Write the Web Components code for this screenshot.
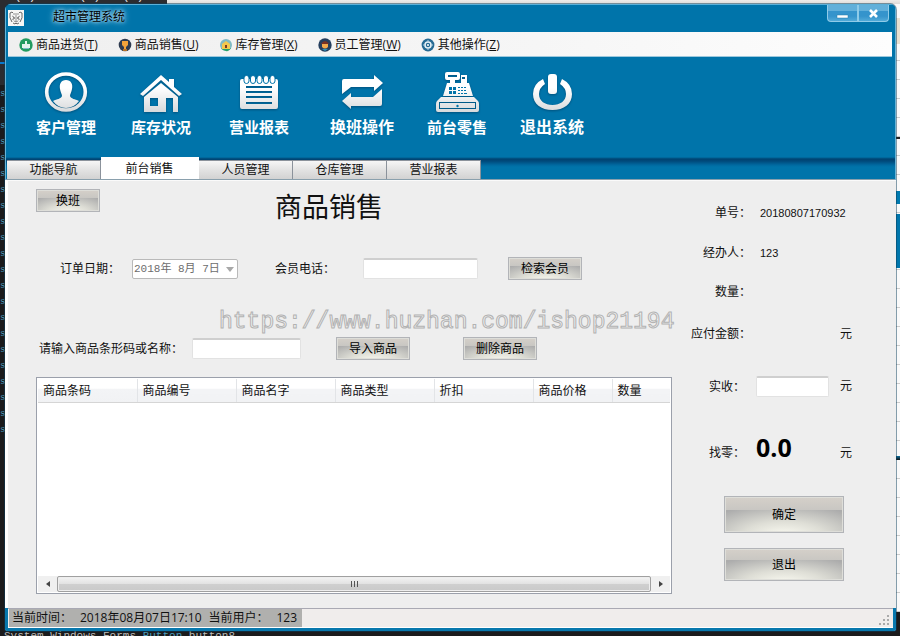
<!DOCTYPE html>
<html lang="zh-CN">
<head>
<meta charset="utf-8">
<title>超市管理系统</title>
<style>
body { margin: 0; padding: 4px 4px 5px 5px; box-sizing: border-box; min-height: 100vh; display: grid; position: relative; overflow: hidden; background: #1b1b1c; font: 12px/16px "Open Sans", "Noto Sans CJK SC", sans-serif; color: #111; }
</style>
</head>
<body>
<desk-backdrop></desk-backdrop>
<pos-window>
  <title-bar slot="title">超市管理系统</title-bar>
  <menu-bar slot="menu"></menu-bar>
  <tool-bar slot="tools"></tool-bar>
  <tab-strip slot="tabs"></tab-strip>
  <sales-form slot="main"></sales-form>
  <checkout-panel slot="side"></checkout-panel>
  <status-bar slot="status"></status-bar>
</pos-window>
<script>
const define = (name, html, setup) => customElements.define(name, class extends HTMLElement {
  constructor() {
    super();
    this.attachShadow({ mode: "open" }).innerHTML = "<style>*{box-sizing:border-box}button{font:inherit;color:inherit;padding:0;border:0;background:none}</style>" + html;
    if (setup) setup(this, this.shadowRoot);
  }
});

/* Editor and sheets that show round the window's edges */
define("desk-backdrop", `
<style>
:host{position:absolute;inset:0;z-index:-1;display:block;overflow:hidden;background:#1b1b1c;font:12px/16px "Liberation Mono",monospace}
.top{position:absolute;top:0;left:167px;right:0;height:12px;background:linear-gradient(#eeece9,#dddad7 4px,#888 5px)}
.code{position:absolute;left:0;top:86px;margin:0;font:9px/16px "Liberation Mono",monospace;color:#4b9bbd}
.tabline{position:absolute;left:0;top:62px;width:5px;height:2px;background:#0a7acc}
.editor{position:absolute;left:0;top:0;width:167px;height:85px;background:#2b2c30}
.head{position:absolute;left:0;top:-12px;color:#ddd;white-space:pre}
.foot{position:absolute;left:4px;bottom:-8px;color:#bbb;font-size:11px}
.foot b{font-weight:400;color:#4b9bbd}
.right{position:absolute;right:0;top:4px;width:10px;height:608px;background:
 linear-gradient(#007ab0,#007ab0) 0 187px/100% 13px no-repeat,
 linear-gradient(#0076ac,#0076ac) 0 210px/100% 54px no-repeat,
 linear-gradient(#222,#222) 0 133px/100% 2px no-repeat,
 linear-gradient(#0a6e9d,#111) 0 452px/100% 4px no-repeat,
 linear-gradient(#e9e0d0,#e9e0d0) 0 14px/100% 26px no-repeat,
 repeating-linear-gradient(#fafafa 0 18px,#ccc 18px 19px)}
</style>
<div class="editor"></div><div class="top"></div><div class="tabline"></div>
<div class="head">  (-)   ▀▀▀(-)   (-)</div>
<pre class="code"></pre><div class="right"></div>
<div class="foot">System.Windows.Forms.<b>Button</b> button8</div>`,
(el, root) => { root.querySelector("pre").textContent = Array(22).fill("s").join("\n"); });

define("pos-window", `
<style>
:host{display:grid;grid-template-rows:28px 25px 100px 23px 1fr 23px;grid-template-columns:minmax(0,1fr) 224px;border-radius:6px 6px 3px 3px;overflow:hidden;background:#0074aa;box-shadow:0 0 0 1px #0b3d5a80}
.wide{grid-column:1/-1;display:grid;min-width:0}
.frame{border:solid #69b4d6;border-width:0 1px}
.title{border-top:1px solid #5cb0d8}
.left,.side{display:grid;background:#eee;border-top:1px solid #fafafa;min-width:0}
.left{border-left:3px solid #fff}
</style>
<div class="wide frame title"><slot name="title"></slot></div>
<div class="wide frame"><slot name="menu"></slot></div>
<div class="wide frame"><slot name="tools"></slot></div>
<div class="wide frame"><slot name="tabs"></slot></div>
<div class="left"><slot name="main"></slot></div>
<div class="side"><slot name="side"></slot></div>
<div class="wide"><slot name="status"></slot></div>`);

define("title-bar", `
<style>
:host{display:flex;align-items:flex-start;padding:0 6px 0 2px}
.logo{margin-top:5px;width:16px;height:16px;background:#f7f7f5;flex:none}
h1{flex:1;margin:4px 0 0 29px;font:12px/16px "Open Sans","Noto Sans CJK SC",sans-serif;color:#000;text-shadow:0 0 3px #9fd3ec,0 0 5px #9fd3ec,0 0 7px #9fd3ec}
button{height:17px;width:31px;border:1px solid #8fcbe8;border-top:0;background:linear-gradient(#62b0da 0 35%,#3594cc 36% 70%,#52aad8);display:grid;place-items:center}
button:first-of-type{border-radius:0 0 0 4px}button:last-of-type{border-radius:0 0 4px 0}
</style>
<svg class="logo" viewBox="0 0 16 16" fill="none" stroke="#444" stroke-width=".8"><path d="M2 3l2-1 1 1M14 3l-2-1-1 1M2 3q-1 5 2 9M14 3q1 5-2 9M5 13l2 1 1-1 1 1 2-1"/><path d="M6 3v2M10 3v2M8 3v9M4 6l2 1M12 6l-2 1M4 9l2 1M12 9l-2 1M6 11l2 1 2-1" stroke="#777"/><path d="M6 7v2M10 7v2" stroke="#000"/></svg>
<h1><slot></slot></h1>
<button aria-label="最小化"><svg width="13" height="13"><path d="M1 8h11v3H1z" fill="#fff" stroke="#2b7cab" stroke-width=".5"/></svg></button>
<button aria-label="关闭"><svg width="13" height="13"><path d="M3 3l7 7M10 3l-7 7" stroke="#fff" stroke-width="2.6"/></svg></button>`);

define("menu-bar", `
<style>
:host{display:flex;margin:0 3px 0 2px;padding:1px 0 0 11px;gap:20px;align-items:center;background:linear-gradient(90deg,#efefef,#f6f6f6 60%,#fdfdfd);border-bottom:1px solid #9cc8dd}
button{display:flex;align-items:center;gap:3px;white-space:nowrap;line-height:16px}
svg{width:14px;height:14px;flex:none}
</style>
<button><svg viewBox="0 0 14 14"><circle cx="7" cy="7" r="6.7" fill="#239b60"/><path d="M6 3h2v3h3v4H3V6h3z" fill="#e5f4ef"/><path d="M4 10h6v1H4z" fill="#7fb9c9"/></svg><span>商品进货(<u>T</u>)</span></button>
<button><svg viewBox="0 0 14 14"><circle cx="7" cy="7" r="6.3" fill="#2e3b50"/><path d="M4 3h6v4L8 9v2H6V9L4 7z" fill="#f2a33b"/><path d="M5 11h4v2H5z" fill="#b5732a"/></svg><span>商品销售(<u>U</u>)</span></button>
<button><svg viewBox="0 0 14 14"><circle cx="7" cy="7" r="6" fill="#81bac4"/><path d="M2 10h10q-2 4-5 3-3 0-5-3" fill="#27a268"/><path d="M3 6l4-3 4 3v5H3z" fill="#f5c84d"/><path d="M6 7h2v3H6z" fill="#7b3b23"/></svg><span>库存管理(<u>X</u>)</span></button>
<button><svg viewBox="0 0 14 14"><circle cx="7" cy="7" r="6.7" fill="#253f5e"/><path d="M3 6q4-6 8 0z" fill="#7a3324"/><path d="M4 6h6v3q-3 3-6 0z" fill="#f0a94c"/><path d="M4 11h6l-3 2z" fill="#2c91bb"/></svg><span>员工管理(<u>W</u>)</span></button>
<button><svg viewBox="0 0 14 14"><circle cx="7" cy="7" r="6.4" fill="#266b94"/><circle cx="7" cy="7" r="3" fill="none" stroke="#e6f1f6" stroke-width="1.6"/><path d="M7 2v2M7 10v2M2 7h2M10 7h2" stroke="#b8d5e4"/><circle cx="7" cy="7" r="1" fill="#fff"/></svg><span>其他操作(<u>Z</u>)</span></button>`);

const toolIcons = {
  user: '<ellipse cx="22" cy="21" rx="19.3" ry="18" fill="none" stroke="url(#g)" stroke-width="3.6"/><path d="M22 9c5 0 7 4 6 9-.4 3-2 5-2 7 1 3 5 3 9 5q-5 7-13 7T9 30c4-2 8-2 9-5 0-2-1.600-4-2-7-1-5 1-9 6-9z"/>',
  home: '<path d="M22 4L1 23l3 2 18-16 18 16 3-2-8-7V8h-5v3z"/><path fill-rule="evenodd" d="M22 12L5 26v15h22V27h7v14h5V26zM11 27h8v8h-8z"/>',
  note: '<path fill-rule="evenodd" d="M3 10q0-2 2-2h34q2 0 2 2v26q0 2-2 2H5q-2 0-2-2zm6 5v2h26v-2zm0 5v2h26v-2zm0 5v2h26v-2zm0 6v2h26v-2z"/><g stroke="#0074aa"><rect x="7" y="4.500" width="5" height="8" rx="2.500"/><rect x="13.500" y="4.500" width="5" height="8" rx="2.500"/><rect x="20" y="4.500" width="5" height="8" rx="2.500"/><rect x="26.500" y="4.500" width="5" height="8" rx="2.500"/><rect x="33" y="4.500" width="5" height="8" rx="2.500"/></g>',
  swap: '<path d="M2 23V10q0-2 2-2h30V4l9 8-9 8v-4H11zM42 18v15q0 2-2 2H11v3l-9-8 9-8v4h22z"/>',
  till: '<path fill-rule="evenodd" d="M12 1h11q2 0 2 2v4q0 2-2 2h-3v3h6V4h6v8h2l4 13H8l4-13h3V9h-3q-2 0-2-2V3q0-2 2-2zm1 3v2h9V4zm14 2v2h3V6z"/><g fill="#0074aa"><path d="M14 16h3v3h-3zM18 16h3v3h-3zM14 20h3v3h-3zM18 20h3v3h-3z"/><path d="M23 16h2v1h-2zM26 16h2v1h-2zM29 16h2v1h-2zM23 19h2v1h-2zM26 19h2v1h-2zM29 19h2v1h-2zM23 22h2v1h-2zM26 22h2v1h-2zM29 22h3v1h-3z"/></g><path fill-rule="evenodd" d="M6 26h33l4 4q1 1 1 3v6q0 2-2 2H3q-2 0-2-2v-6q0-2 1-3zM4 31v7h37v-7zm1 1h35v5H5z"/><circle cx="22.500" cy="35" r="1.200" fill="#0074aa"/>',
  power: '<rect x="18" y="3" width="9" height="20" rx="3"/><path d="M13 8l2 5q-6 4-6 10c0 7 6 11 13.500 11S36 30 36 23q0-6-6-10l2-5q10 5 10 15c0 10-8 16-19.500 16S3 33 3 23q0-10 10-15z"/>'
};
define("tool-button", `
<style>
:host{display:grid;justify-items:center;align-content:start}
button{display:grid;justify-items:center;gap:2px;color:#fff;font:700 var(--label,15px)/20px "Open Sans","Noto Sans CJK SC",sans-serif;white-space:nowrap}
svg{width:44px;height:44px;filter:drop-shadow(0 1px 1px #00517c)}
</style>
<button><svg viewBox="0 0 44 44" fill="url(#g)"></svg><span><slot></slot></span></button>`,
(el, root) => { root.querySelector("svg").innerHTML = '<defs><linearGradient id="g" gradientUnits="userSpaceOnUse" x1="0" y1="0" x2="0" y2="42"><stop offset=".4" stop-color="#fff"/><stop offset="1" stop-color="#d6d8da"/></linearGradient></defs>' + toolIcons[el.getAttribute("icon")]; });

define("tool-bar", `
<style>
:host{display:grid;grid-template-columns:96px 94px 102px 104px 86px 104px;padding:14px 0 0 12px}
.big{--label:16px}
</style>
<tool-button icon="user">客户管理</tool-button><tool-button icon="home">库存状况</tool-button><tool-button icon="note">营业报表</tool-button><tool-button class="big" icon="swap">换班操作</tool-button><tool-button icon="till">前台零售</tool-button><tool-button class="big" icon="power">退出系统</tool-button>`);

define("tab-strip", `
<style>
:host{display:flex;align-items:flex-end;padding-left:1px;background:linear-gradient(#0074aa,#004372 2px,#00497a 4px,#0069a0 8px,#0074aa 10px);border-bottom:1px solid #8aa0ad}
button{width:94px;height:19px;line-height:18px;border:1px solid #8b929b;border-width:1px 1px 0 0;background:linear-gradient(#f6f6f6,#e4e4e4 45%,#d2d2d2)}
button:first-child{width:93px}
button[aria-selected=true]{width:98px;height:22px;line-height:20px;background:#fff;border-color:#fff}
</style>
<button role="tab">功能导航</button><button role="tab" aria-selected="true">前台销售</button><button role="tab">人员管理</button><button role="tab">仓库管理</button><button role="tab">营业报表</button>`);

define("gloss-button", `
<style>
:host{display:grid;height:23px}
button{width:100%;height:100%;border:1px solid #b2b4b8;box-shadow:inset 0 0 0 1px #deded9;color:#000;line-height:16px;background:
 linear-gradient(#d5d0c9,#c9c7c3 36%,transparent 37%),
 radial-gradient(ellipse 75% 90% at 50% 110%,#fbfbf2,#deded6 45%,#acacac)}
</style>
<button><slot></slot></button>`);

const fieldCss = `<style>
input{height:21px;min-width:0;padding:0 3px;border:1px solid #e2e2e2;border-top:2px solid #cfcfcf;border-radius:2px;background:#fff;font:inherit}
.c{font-family:"Noto Sans CJK JP",sans-serif}
label{white-space:nowrap;line-height:16px}
</style>`;

define("goods-table", `
<style>
:host{display:flex;flex-direction:column;border:1px solid #9ba0ab;background:#fff;padding:1px}
table{width:100%;table-layout:fixed;border-collapse:collapse}
th{height:23px;padding:1px 0 0 5px;text-align:left;font-weight:400;line-height:16px;white-space:nowrap;border-right:1px solid #e2e4e7;border-bottom:1px solid #d5d5d5;background:linear-gradient(#fff 40%,#f3f4f6 45%,#f1f2f4)}
th:last-child{border-right:0}
.bar{margin-top:auto;display:flex;height:16px;background:#f0f0f0}
.arrow{width:19px;display:grid;place-items:center}
.thumb{flex:1;border:1px solid #a0a0a0;border-radius:2px;background:linear-gradient(#f4f4f4,#e2e2e2 48%,#cfcfcf 52%,#c9c9c9);box-shadow:inset 0 0 0 1px #eee;display:grid;place-items:center}
</style>
<table><colgroup><col style="width:99px"><col style="width:99px"><col style="width:99px"><col style="width:99px"><col style="width:99px"><col style="width:79px"><col></colgroup>
<thead><tr><th>商品条码</th><th>商品编号</th><th>商品名字</th><th>商品类型</th><th>折扣</th><th>商品价格</th><th>数量</th></tr></thead><tbody></tbody></table>
<div class="bar"><button class="arrow" aria-label="向左"><svg width="6" height="8"><path d="M5 1v6L1 4z" fill="#444"/></svg></button><div class="thumb"><svg width="9" height="7"><path d="M1.500 0v6M4.500 0v6M7.500 0v6" stroke="#555"/></svg></div><button class="arrow" aria-label="向右"><svg width="6" height="8"><path d="M1 1v6l4-3z" fill="#444"/></svg></button></div>`);

define("sales-form", fieldCss + `
<style>
:host{display:grid;grid-template-rows:68px 80px 40px 1fr;padding:8px 0 14px 28px;position:relative}
.row{display:flex;align-items:center;height:23px}
.head{align-items:flex-start;gap:175px}
.head gloss-button{width:64px}
h2{margin:0;font:27px/36px "Open Sans","Noto Sans CJK SC",sans-serif;color:#111}
select{appearance:none;height:20px;width:100%;padding:0 1px;border:1px solid #b9b9b9;border-radius:2px;font:11px/16px "Liberation Mono","Noto Sans CJK SC",monospace;color:#6d6d6d;opacity:1;background:#fff}
.pick{position:relative;display:grid;width:106px;margin-right:37px}
.pick svg{position:absolute;right:4px;top:8px}
.member{padding-left:24px}
.member label{width:72px}
.member .tel{width:88px}
.member input{width:115px;margin-right:30px}
.goods{padding-left:3px}
.goods label{width:153px}
.goods input{width:109px;margin-right:35px}
.goods gloss-button{margin-right:53px}
.member gloss-button,.goods gloss-button{width:74px}
.mark{position:absolute;left:211px;top:125px;font:23px/32px "Liberation Mono",monospace;color:#f2f2f2;-webkit-text-stroke:1px #b2b2b2;pointer-events:none;white-space:nowrap}
</style>
<div class="row head"><gloss-button>换班</gloss-button><h2>商品销售</h2></div>
<div class="row member"><label for="date">订单日期<span class="c">&#xFF1A;</span></label><span class="pick"><select id="date" disabled><option>2018年 8月 7日</option></select><svg width="8" height="5"><path d="M0 0h8L4 5z" fill="#a8a8a8"/></svg></span><label class="tel" for="tel">会员电话<span class="c">&#xFF1A;</span></label><input id="tel"><gloss-button>检索会员</gloss-button></div>
<div class="row goods"><label for="code">请输入商品条形码或名称&#xFF1A;</label><input id="code"><gloss-button>导入商品</gloss-button><gloss-button>删除商品</gloss-button></div>
<goods-table></goods-table>
<div class="mark">https://www.huzhan.com/ishop21194</div>`);

define("checkout-panel", fieldCss + `
<style>
:host{display:block;padding:12px 0 0 19px}
dl{margin:0;display:grid;grid-template-columns:60px 73px 1fr;grid-template-rows:40px 39px 42px 52px 65px 65px;column-gap:5px}
.r{display:grid;grid-template-columns:subgrid;grid-column:1/-1;align-items:center;height:40px}
.last{align-items:baseline;height:32px}
dt{text-align:right;white-space:nowrap}dd{margin:0}
.in{padding-right:6px}
.num{font:11px/16px "Liberation Sans",sans-serif;white-space:nowrap;padding-left:4px}
.u{padding-left:6px}
.sum{font:700 25px/32px "Open Sans","Noto Sans",sans-serif;color:#000}
input{width:73px;display:block}
gloss-button{width:120px;margin-left:33px}
.ok{height:37px;margin-bottom:15px}.no{height:33px}
</style>
<dl>
<div class="r"><dt>单号&#xFF1A;</dt><dd class="num">20180807170932</dd></div>
<div class="r"><dt>经办人&#xFF1A;</dt><dd class="num">123</dd></div>
<div class="r"><dt>数量&#xFF1A;</dt><dd></dd></div>
<div class="r"><dt>应付金额&#xFF1A;</dt><dd></dd><dd class="u">元</dd></div>
<div class="r"><dt class="in"><label for="paid">实收<span class="c">&#xFF1A;</span></label></dt><dd><input id="paid"></dd><dd class="u">元</dd></div>
<div class="r last"><dt class="in">找零&#xFF1A;</dt><dd class="sum">0.0</dd><dd class="u">元</dd></div>
</dl>
<gloss-button class="ok">确定</gloss-button><gloss-button class="no">退出</gloss-button>`);

define("status-bar", `
<style>
:host{display:flex;justify-content:space-between;align-items:stretch;border:solid #0878ad;border-width:0 3px 3px;box-shadow:inset 0 1px #a9a9b3,inset 0 -1px #fff;background:#f0edec;padding:1px 2px 1px 1px}
.text{display:flex;background:#b0b0ae;padding:0 5px 0 3px;line-height:18px;white-space:nowrap}
.text span{font-family:"Open Sans","Noto Sans CJK JP",sans-serif}
.k{width:68px}
.v{margin-right:7px}
svg{align-self:end}
</style>
<div class="text"><div class="k">当前时间<span>&#xFF1A;</span></div><div class="v">2018年08月07日17:10</div><div class="k">当前用户<span>&#xFF1A;</span></div><div>123</div></div>
<svg width="12" height="13" fill="#aaa"><path d="M8 1h2v2H8zM4 5h2v2H4zM8 5h2v2H8zM0 9h2v2H0zM4 9h2v2H4zM8 9h2v2H8z"/></svg>`);
</script>
</body>
</html>
